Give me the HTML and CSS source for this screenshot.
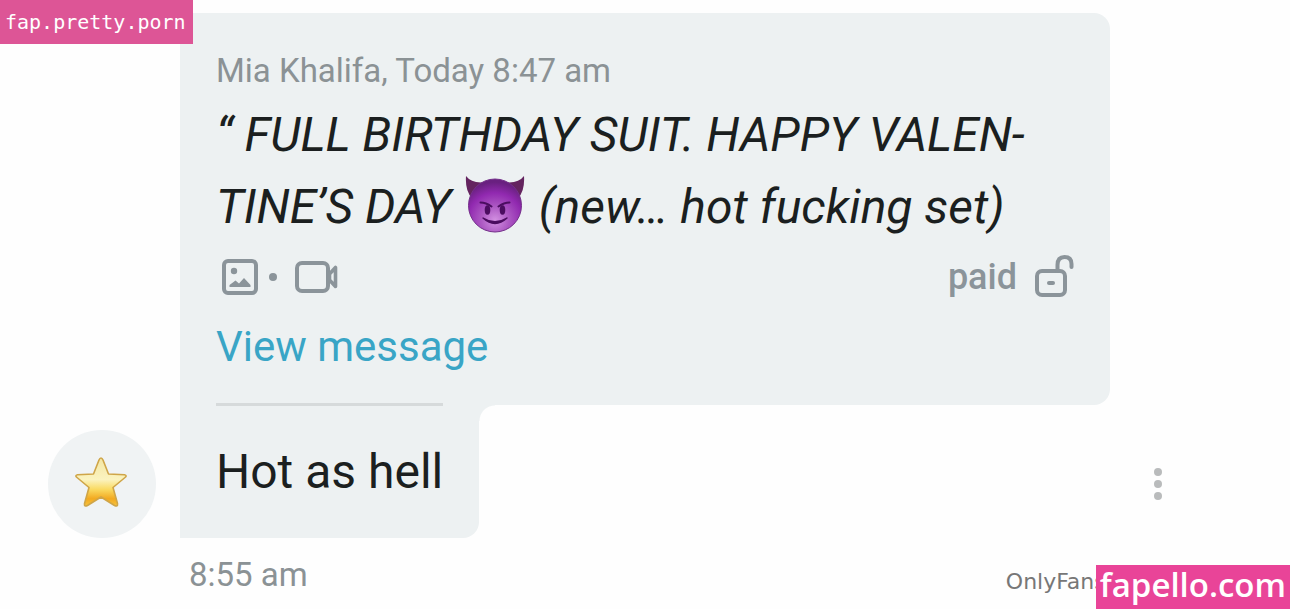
FILE: index.html
```html
<!DOCTYPE html>
<html lang="en">
<head>
<meta charset="utf-8">
<title>Messages</title>
<link rel="stylesheet" href="styles.css">
</head>
<body>
<main class="chat">
  <article class="message">
    <div class="avatar">
      <svg class="star" viewBox="0 0 54 52" role="img" aria-label="Star">
        <defs><linearGradient id="gold" x1="0" y1="0" x2="0" y2="1">
          <stop offset="0" stop-color="#f3e6a4"/><stop offset=".45" stop-color="#fbf3bf"/><stop offset=".65" stop-color="#fadb62"/><stop offset=".85" stop-color="#f2a920"/><stop offset="1" stop-color="#f6c23c"/>
        </linearGradient></defs>
        <path d="M27 2 Q28.200 2 29 4 L34.500 18 L50.500 18.800 Q53.500 19.500 51 21.500 L39 31.500 L43.500 47.500 Q44 51 40.500 49.500 L27 41 L13.500 49.500 Q10 51 10.500 47.500 L15 31.500 L3 21.500 Q.5 19.500 3.500 18.800 L19.500 18 L25 4 Q25.800 2 27 2Z" fill="url(#gold)" stroke="#cfa548" stroke-width="1.600" stroke-linejoin="round"/>
      </svg>
    </div>
    <div class="content">
      <section class="quote">
        <p class="meta">Mia Khalifa, Today 8:47 am</p>
        <blockquote class="quote-text">“ FULL BIRTHDAY SUIT. HAPPY VALEN-<br>TINE’S DAY <svg class="emoji" viewBox="0 0 60 58" role="img" aria-label="Smiling face with horns">
          <defs><radialGradient id="face" cx=".5" cy=".78" r=".72">
            <stop offset="0" stop-color="#d391e2"/><stop offset=".35" stop-color="#ae5bc4"/><stop offset=".72" stop-color="#9129b0"/><stop offset="1" stop-color="#692080"/>
          </radialGradient></defs>
          <path d="M1 1 Q0 16 7 23 L21 7 Q7 9 1 1Z M59 1 Q60 16 53 23 L39 7 Q53 9 59 1Z" fill="#64245f"/>
          <circle cx="30" cy="30.500" r="26.500" fill="url(#face)" stroke="#74308a"/>
          <path d="M15.500 27.500 Q21 27.500 26.500 31.500 M44.500 27.500 Q39 27.500 33.500 31.500" fill="none" stroke="#4b0d60" stroke-width="2" stroke-linecap="round"/>
          <ellipse cx="22.500" cy="35" rx="2.800" ry="4.700" fill="#4b0d60"/><ellipse cx="37.500" cy="35" rx="2.800" ry="4.700" fill="#4b0d60"/>
          <path d="M18 43 Q30 54 42 43 Q30 50.500 18 43Z" fill="#4b0d60" stroke="#4b0d60" stroke-width="1.400" stroke-linejoin="round"/>
        </svg> (new… hot fucking set)</blockquote>
        <div class="details">
          <svg class="photo" viewBox="0 0 36 36" role="img" aria-label="Photo"><rect x="2" y="2" width="32" height="32" rx="4" fill="none" stroke="currentColor" stroke-width="4"/><circle cx="12" cy="12" r="3.200" fill="currentColor"/><path d="M7.500 28 V26 L13.500 21.500 L17 24.500 L22 19 L28.500 26 V28Z" fill="currentColor"/></svg>
          <span class="dot"></span>
          <svg class="video" viewBox="0 0 43 34" role="img" aria-label="Video"><rect x="2" y="3" width="31" height="28" rx="5" fill="none" stroke="currentColor" stroke-width="4"/><path d="M34.500 14 L40.500 7.500 V26.500 L34.500 20Z" fill="none" stroke="currentColor" stroke-width="3.600" stroke-linejoin="round"/></svg>
          <span class="paid">paid</span>
          <svg class="lock" viewBox="0 0 39 44" role="img" aria-label="Unlocked"><rect x="2" y="16" width="28" height="24" rx="5" fill="none" stroke="currentColor" stroke-width="4"/><path d="M22.500 16 V10 Q22.500 2 29.500 2 Q36.500 2 36.500 9 V12" fill="none" stroke="currentColor" stroke-width="4" stroke-linecap="round"/><rect x="12" y="26" width="8" height="4" rx="2" fill="currentColor"/></svg>
        </div>
        <a class="view" href="#message">View message</a>
      </section>
      <div class="reply"><p class="reply-text">Hot as hell</p></div>
    </div>
    <button class="more" type="button" aria-label="More options"><span class="more-dot"></span><span class="more-dot"></span><span class="more-dot"></span></button>
  </article>
  <time class="sent">8:55 am</time>
</main>
<div class="tag">fap.pretty.porn</div>
<footer class="credit"><span class="source">OnlyFans</span><span class="brand">fapello.com</span></footer>
</body>
</html>
```
FILE: styles.css
```css
* { box-sizing: border-box; }
body { margin: 0; background: #fefefe; font-family: Roboto, sans-serif; color: #1b1f20; }
p, blockquote { margin: 0; }
svg { flex: none; }
.chat { padding: 13px 84px 0 48px; }
.message { display: grid; grid-template-columns: 108px minmax(0, 1fr) 96px; align-items: end; }
.avatar { display: flex; align-items: center; justify-content: center; width: 108px; height: 108px; border-radius: 50%; background: #f0f3f4; }
.star { width: 54px; height: 52px; margin: 0 2px 4px 0; }
.content { padding-left: 24px; }
.quote { padding: 36px 36px 32px; border-radius: 0 16px 16px 0; background: #edf1f2; }
.meta { font-size: 33px; line-height: 44px; color: #8b9295; }
.quote-text { margin-top: 6px; font-size: 48px; line-height: 72px; font-style: italic; white-space: nowrap; }
.emoji { width: 60px; height: 58px; margin: 0 2px; vertical-align: -10px; }
.details { display: flex; align-items: center; height: 44px; margin-top: 12px; padding-left: 6px; color: #8b949a; }
.photo { width: 36px; height: 36px; }
.dot { width: 8px; height: 8px; margin: 0 18px 0 11px; border-radius: 50%; background: currentColor; }
.video { width: 43px; height: 34px; }
.paid { margin: 0 18px 0 auto; font-size: 36px; line-height: 44px; font-weight: 500; }
.lock { width: 39px; height: 44px; }
.view { display: block; width: max-content; margin-top: 22px; font-size: 42px; line-height: 52px; color: #39a5c6; text-decoration: none; }
.reply { position: relative; width: max-content; margin-top: -2px; padding: 0 36px 30px; border-radius: 0 0 16px; background: #edf1f2; }
.reply::after { content: ""; position: absolute; top: 2px; left: 100%; width: 16px; height: 16px; background: radial-gradient(circle at 100% 100%, transparent 15px, #edf1f2 16px); }
.reply-text { padding-top: 30px; border-top: 3px solid #d6dadb; font-size: 48px; line-height: 72px; }
.more { display: flex; flex-direction: column; align-items: center; justify-content: center; gap: 4px; width: 96px; height: 108px; padding: 0; border: 0; background: none; }
.more-dot { width: 8px; height: 8px; border-radius: 50%; background: #b9bbbc; }
.sent { display: block; margin: 15px 0 0 141px; font-size: 33px; line-height: 44px; color: #8b9295; }
.tag { position: absolute; top: 0; left: 0; padding: 0 7px 0 5px; background: #dd5596; color: #fff; font: 20px/44px "DejaVu Sans Mono", monospace; }
.credit { position: absolute; right: 0; bottom: 0; display: flex; }
.source { margin-right: -10px; color: #777; font: 22px/34px "DejaVu Sans", sans-serif; }
.brand { position: relative; padding: 0 4px; background: #e94498; color: #fff; font: 600 33px/40px "Open Sans", sans-serif; padding-bottom: 4px; }
```
